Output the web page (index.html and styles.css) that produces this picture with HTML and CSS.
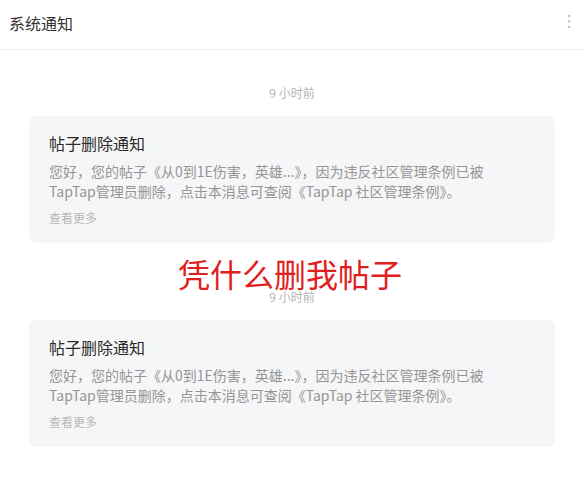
FILE: index.html
```html
<!DOCTYPE html>
<html lang="zh-CN">
<head>
<meta charset="utf-8">
<title>系统通知</title>
<link rel="stylesheet" href="styles.css">
</head>
<body>
<div class="page">
  <header class="header">
    <h1 class="header-title">系统通知</h1>
    <div class="more-btn">
      <svg width="4" height="16" viewBox="0 0 4 16"><circle cx="2" cy="2" r="1.3" fill="#c4c4c4"/><circle cx="2" cy="7.5" r="1.3" fill="#c4c4c4"/><circle cx="2" cy="13" r="1.3" fill="#c4c4c4"/></svg>
    </div>
  </header>
  <main class="list">
    <section class="item">
      <div class="time">9 小时前</div>
      <div class="card">
        <div class="card-title">帖子删除通知</div>
        <p class="card-body">您好，您的帖子《从0到1E伤害，英雄...》，因为违反社区管理条例已被TapTap管理员删除，点击本消息可查阅《TapTap 社区管理条例》。</p>
        <div class="card-more">查看更多</div>
      </div>
    </section>
    <section class="item">
      <div class="time">9 小时前</div>
      <div class="card">
        <div class="card-title">帖子删除通知</div>
        <p class="card-body">您好，您的帖子《从0到1E伤害，英雄...》，因为违反社区管理条例已被TapTap管理员删除，点击本消息可查阅《TapTap 社区管理条例》。</p>
        <div class="card-more">查看更多</div>
      </div>
    </section>
  </main>
  <div class="overlay-text">凭什么删我帖子</div>
</div>
</body>
</html>
```

FILE: styles.css
```css
* { box-sizing: border-box; }
html, body { margin: 0; padding: 0; background: #fff; }
body {
  font-family: "Microsoft YaHei", "Noto Sans CJK SC", "Noto Sans", sans-serif;
  width: 584px;
  height: 483px;
  overflow: hidden;
}
.page { position: relative; width: 584px; height: 483px; }
.header {
  height: 50px;
  border-bottom: 1px solid #ededed;
  display: flex;
  align-items: flex-start;
  justify-content: space-between;
  padding: 12px 13px 0 9px;
}
.header-title {
  margin: 0;
  font-size: 16px;
  font-weight: normal;
  line-height: 22px;
  color: #333;
}
.more-btn { padding-top: 2px; display: flex; }
.more-btn svg { display: block; }
.list {
  padding: 36px 29px 0;
  display: flex;
  flex-direction: column;
  gap: 47px;
}
.item { display: flex; flex-direction: column; }
.time {
  text-align: center;
  font-size: 12px;
  line-height: 14px;
  color: #b5b5b5;
  margin-bottom: 16px;
}
.card {
  background: #f5f6f8;
  border-radius: 6px;
  padding: 16px 20px 16px;
  height: 127px;
}
.card-title {
  font-size: 16px;
  line-height: 22px;
  color: #2a2a2a;
}
.card-body {
  margin: 7px 0 0;
  font-size: 14px;
  line-height: 20px;
  color: #959595;
  padding-right: 30px;
}
.card-more {
  margin-top: 8px;
  font-size: 12px;
  line-height: 18px;
  color: #b8b8b8;
}
.overlay-text {
  position: absolute;
  left: 178px;
  top: 253px;
  font-size: 32px;
  line-height: 40px;
  color: #e0201c;
  white-space: nowrap;
}
```
